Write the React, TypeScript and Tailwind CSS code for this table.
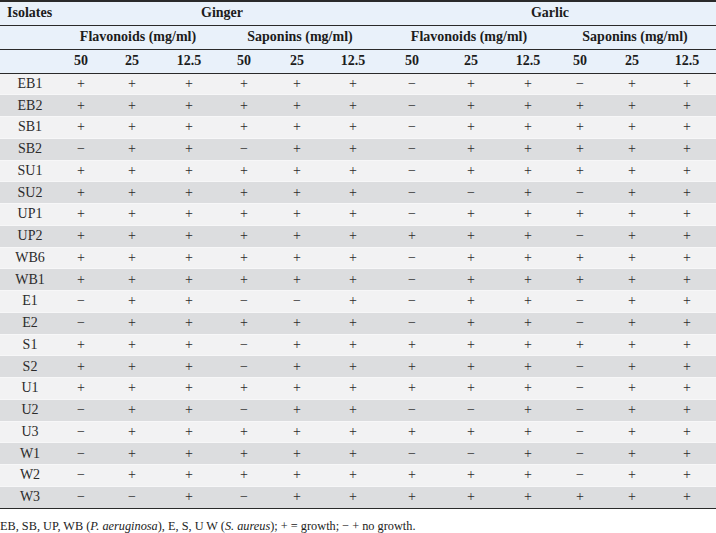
const widths = [60, 42, 60, 54, 56, 50, 62, 56, 62, 52, 52, 52, 58];

const rows: [string, string][] = [
  ["EB1", "++++++-++-++"],
  ["EB2", "++++++-+++++"],
  ["SB1", "++++++-+++++"],
  ["SB2", "-++-++-+++++"],
  ["SU1", "++++++-+++++"],
  ["SU2", "++++++--+-++"],
  ["UP1", "++++++-+++++"],
  ["UP2", "+++++++++-++"],
  ["WB6", "++++++-+++++"],
  ["WB1", "++++++-+++++"],
  ["E1", "-++--+-++-++"],
  ["E2", "-+++++-++-++"],
  ["S1", "+++-++++++++"],
  ["S2", "+++-+++++-++"],
  ["U1", "+++++++++-++"],
  ["U2", "-++-++--+-++"],
  ["U3", "-++++++++-++"],
  ["W1", "-+++++--+-++"],
  ["W2", "-++++++++-++"],
  ["W3", "--+-++++++++"],
];

const concs = ["50", "25", "12.5", "50", "25", "12.5", "50", "25", "12.5", "50", "25", "12.5"];

export default function App() {
  return (
    <div className="w-[716px] bg-white text-[#222] font-[family-name:'Liberation_Serif','Times_New_Roman',serif]">
      <table className="w-[716px] table-fixed border-collapse text-[14px] leading-[16px]">
        <colgroup>
          {widths.map((w, i) => (
            <col key={i} style={{ width: w }} />
          ))}
        </colgroup>
        <thead className="bg-[#e9f1fa] font-bold text-[#1c1c1c]">
          <tr className="h-[24px] border-t-2 border-[#2a2a2a]">
            <th className="text-left pl-[7px] font-bold p-0">Isolates</th>
            <th colSpan={6} className="font-bold p-0">Ginger</th>
            <th colSpan={6} className="font-bold p-0">Garlic</th>
          </tr>
          <tr className="h-[24px] border-t border-[#2a2a2a]">
            <th className="p-0"></th>
            <th colSpan={3} className="font-bold p-0">Flavonoids (mg/ml)</th>
            <th colSpan={3} className="font-bold p-0">Saponins (mg/ml)</th>
            <th colSpan={3} className="font-bold p-0">Flavonoids (mg/ml)</th>
            <th colSpan={3} className="font-bold p-0">Saponins (mg/ml)</th>
          </tr>
          <tr className="h-[24px] border-t border-b border-[#2a2a2a]">
            <th className="p-0"></th>
            {concs.map((c, i) => (
              <th key={i} className="font-bold p-0">{c}</th>
            ))}
          </tr>
        </thead>
        <tbody className="text-[#2b2b2b]">
          {rows.map(([name, vals], r) => (
            <tr
              key={name}
              className={`h-[21.75px] border-t border-[#f7f7f8] ${r % 2 === 0 ? "bg-[#f2f2f3]" : "bg-[#dcdddf]"}`}
            >
              <td className="text-center p-0">{name}</td>
              {vals.split("").map((v, i) => (
                <td key={i} className="text-center p-0">
                  {v === "+" ? "+" : "\u2212"}
                </td>
              ))}
            </tr>
          ))}
          <tr className="h-0 border-t border-[#2a2a2a]">
            <td colSpan={13} className="p-0"></td>
          </tr>
        </tbody>
      </table>
      <p className="mt-[10px] text-[12.3px] leading-[14px] text-[#222]">
        EB, SB, UP, WB (<i>P. aeruginosa</i>), E, S, U W (<i>S. aureus</i>); + = growth; − + no growth.
      </p>
    </div>
  );
}
